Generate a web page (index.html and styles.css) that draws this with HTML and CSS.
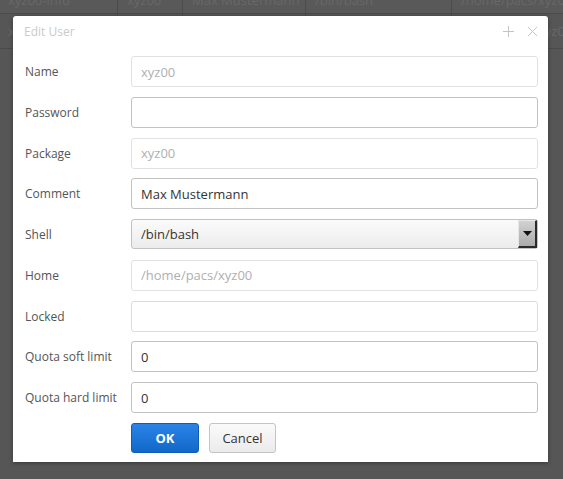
FILE: index.html
```html
<!DOCTYPE html>
<html>
<head>
<meta charset="utf-8">
<link rel="stylesheet" href="styles.css">
</head>
<body>
<div class="bg">
  <div class="bg-row bg-row-top">
    <div class="cell c1">xyz00-info</div>
    <div class="cell c2">xyz00</div>
    <div class="cell c3">Max Mustermann</div>
    <div class="cell c4">/bin/bash</div>
    <div class="cell c5">/home/pacs/xyz00</div>
  </div>
  <div class="bg-row bg-row-2">
    <div class="cell c1">xyz00-test</div>
    <div class="cell c2">xyz00</div>
    <div class="cell c3">Test User</div>
    <div class="cell c4">/bin/bash</div>
    <div class="cell c5">/home/pacs/xyz00</div>
  </div>
</div>

<div class="dialog">
  <div class="dlg-head">
    <span class="dlg-title">Edit User</span>
    <span class="dlg-icons">
      <svg width="11" height="11" viewBox="0 0 11 11"><path d="M0 5.5H11M5.5 0V11" stroke="#c4c4c4" stroke-width="1" fill="none"/></svg>
      <svg width="11" height="11" viewBox="0 0 11 11"><path d="M1 1L10 10M10 1L1 10" stroke="#c4c4c4" stroke-width="1" fill="none"/></svg>
    </span>
  </div>
  <div class="form">
    <label>Name</label><div class="inp dis">xyz00</div>
    <label>Password</label><div class="inp"></div>
    <label>Package</label><div class="inp dis">xyz00</div>
    <label>Comment</label><div class="inp">Max Mustermann</div>
    <label>Shell</label>
    <div class="sel"><span>/bin/bash</span><span class="sel-btn"><svg width="9" height="5" viewBox="0 0 9 5"><path d="M0 0H9L4.5 5Z" fill="#111"/></svg></span></div>
    <label>Home</label><div class="inp dis">/home/pacs/xyz00</div>
    <label>Locked</label><div class="inp lock"></div>
    <label>Quota soft limit</label><div class="inp">0</div>
    <label>Quota hard limit</label><div class="inp">0</div>
    <div></div>
    <div class="btns"><button class="btn ok">OK</button><button class="btn cancel">Cancel</button></div>
  </div>
</div>
</body>
</html>
```

FILE: styles.css
```css
html, body {
  margin: 0;
  padding: 0;
}
body {
  width: 563px;
  height: 479px;
  background: #565656;
  font-family: "Open Sans", "DejaVu Sans", sans-serif;
  overflow: hidden;
  position: relative;
}
.bg {
  color: #686868;
  font-size: 13px;
}
.bg-row {
  display: flex;
  border-bottom: 1px solid #4b4b4b;
  white-space: nowrap;
}
.bg-row-top {
  height: 26px;
  margin-top: -13px;
  background: #595959;
}
.bg-row-2 {
  height: 34px;
}
.cell {
  border-right: 1px solid #4c4c4c;
  padding-left: 9px;
  overflow: hidden;
  box-sizing: border-box;
  display: flex;
  align-items: center;
}
.c1 { width: 118px; padding-left: 8px; }
.c2 { width: 65px; }
.c3 { width: 123px; }
.c4 { width: 146px; }
.c5 { flex: 1; border-right: 0; }

.dialog {
  position: absolute;
  left: 13px;
  top: 16px;
  width: 535px;
  height: 446px;
  background: #fff;
  border-radius: 3px 3px 0 0;
  box-shadow: 0 1px 4px rgba(0,0,0,0.35);
  box-sizing: border-box;
}
.dlg-head {
  height: 30px;
  display: flex;
  align-items: center;
  justify-content: space-between;
  padding: 0 10px 0 11px;
}
.dlg-title {
  font-size: 12px;
  color: #cacaca;
}
.dlg-icons {
  display: flex;
  gap: 13px;
  align-items: center;
}
.dlg-icons svg { display: block; }
.form {
  display: grid;
  grid-template-columns: 106px 407px;
  grid-auto-rows: 31px;
  row-gap: 9.75px;
  padding: 10px 0 0 12px;
}
.form label {
  font-size: 12px;
  color: #555;
  display: flex;
  align-items: center;
}
.inp {
  box-sizing: border-box;
  border: 1px solid #c2c2c2;
  border-radius: 3px;
  font-size: 13px;
  color: #333;
  padding: 0 9px;
  display: flex;
  align-items: center;
}
.inp.dis {
  border-color: #e2e2e2;
  color: #b0b0b0;
}
.inp.lock {
  border-color: #dcdcdc;
}
.sel {
  box-sizing: border-box;
  border: 1px solid #c2c2c2;
  border-radius: 3px;
  background: linear-gradient(#fbfbfb, #ececec);
  font-size: 13px;
  color: #333;
  padding: 0 0 0 9px;
  display: flex;
  align-items: center;
  justify-content: space-between;
  height: 30px;
}
.sel-btn {
  width: 19px;
  height: 28px;
  box-sizing: border-box;
  background: linear-gradient(#d2d2d2, #aaaaaa);
  border-left: 1px solid #e6e6e6;
  border-top: 1px solid #e6e6e6;
  border-right: 2px solid #2a2a2a;
  border-bottom: 2px solid #2a2a2a;
  display: flex;
  align-items: center;
  justify-content: center;
}
.btns {
  display: flex;
  gap: 10px;
  align-items: stretch;
  height: 30px;
}
.btn {
  font-family: "Open Sans", "DejaVu Sans", sans-serif;
  font-size: 13px;
  border-radius: 3px;
  box-sizing: border-box;
  padding: 0;
  cursor: pointer;
}
.ok {
  width: 68px;
  background: linear-gradient(#2a84e6, #1268c9);
  border: 1px solid #0f5db5;
  color: #fff;
  font-weight: bold;
}
.cancel {
  width: 67px;
  background: linear-gradient(#fafafa, #ebebeb);
  border: 1px solid #c4c4c4;
  color: #333;
}
```
